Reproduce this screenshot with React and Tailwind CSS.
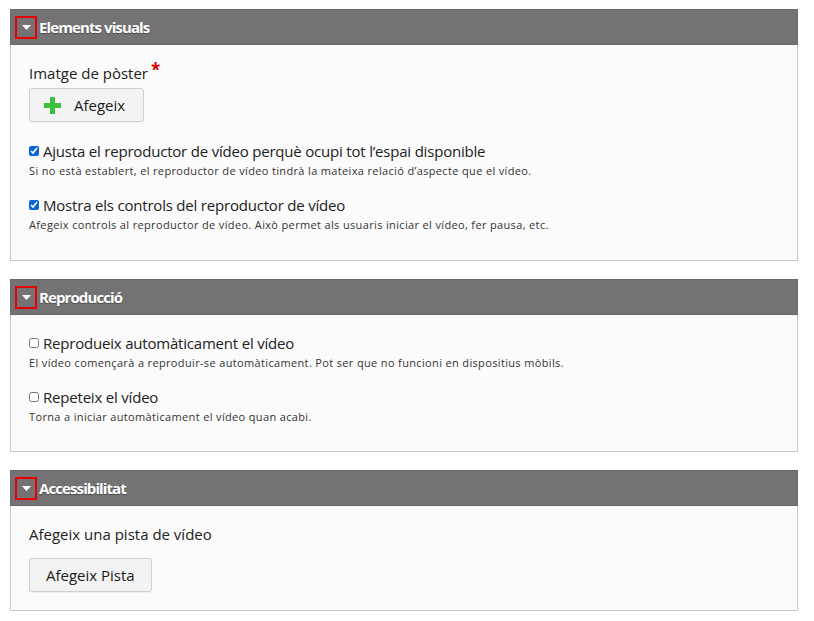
import React from 'react';

const font = { fontFamily: '"Open Sans", "Noto Sans", sans-serif' };

function Section({ title, children, bodyClass = '' }) {
  return (
    <div className="mb-[18px] border border-[#c8c8c8]">
      <div className="flex h-[36px] items-center border border-[#6a686a] bg-[#747274] -m-px mb-0 pl-[4px]">
        <span className="flex h-[23px] w-[22px] items-center justify-center border-2 border-[#e60000]">
          <svg width="9" height="5" viewBox="0 0 9 5">
            <path d="M0 0 L9 0 L4.5 5 Z" fill="#fff" />
          </svg>
        </span>
        <span className="ml-[2px] text-[15px] font-bold tracking-[-0.9px] text-white [text-shadow:0_1px_1px_rgba(0,0,0,0.35)]">
          {title}
        </span>
      </div>
      <div className={`bg-[#fbfbfb] px-[18px] ${bodyClass}`}>{children}</div>
    </div>
  );
}

function Check({ checked, label, desc }) {
  return (
    <div>
      <label className="flex items-center gap-[4px] text-[15px] leading-[20px] text-[#222]">
        <input type="checkbox" defaultChecked={checked} className="m-0 h-[10px] w-[10px] accent-[#0a66d8]" />
        <span className="tracking-[-0.2px]">{label}</span>
      </label>
      <div className="mt-[2px] text-[11px] leading-[16px] tracking-[0.35px] text-[#333]">{desc}</div>
    </div>
  );
}

function Button({ children }) {
  return (
    <button className="flex h-[34px] items-center rounded-[3px] border border-[#cfcfcf] bg-[#f3f3f3] text-[15px] text-[#1a1a1a] shadow-[0_1px_0_rgba(0,0,0,0.04)]">
      {children}
    </button>
  );
}

export default function App() {
  return (
    <div className="min-h-screen bg-white pl-[10px] pr-[16px] pt-[9px]" style={font}>
      <Section title="Elements visuals" bodyClass="pt-[18px] pb-[27px]">
        <div className="flex items-start text-[15px] leading-[20px] text-[#222]">
          Imatge de pòster
          <span className="ml-[3px] -mt-[3px] text-[17px] font-bold text-[#d60000]">*</span>
        </div>
        <div className="mt-[5px]">
          <Button>
            <span className="ml-[14px] mr-[13px] flex">
              <svg width="17" height="17" viewBox="0 0 17 17">
                <path d="M6 0h5v6h6v5h-6v6H6v-6H0V6h6z" fill="#3cbf3c" />
              </svg>
            </span>
            <span className="pr-[18px]">Afegeix</span>
          </Button>
        </div>
        <div className="mt-[19px] flex flex-col gap-[16px]">
          <Check
            checked
            label="Ajusta el reproductor de vídeo perquè ocupi tot l’espai disponible"
            desc="Si no està establert, el reproductor de vídeo tindrà la mateixa relació d’aspecte que el vídeo."
          />
          <Check
            checked
            label="Mostra els controls del reproductor de vídeo"
            desc="Afegeix controls al reproductor de vídeo. Això permet als usuaris iniciar el vídeo, fer pausa, etc."
          />
        </div>
      </Section>

      <Section title="Reproducció" bodyClass="pt-[18px] pb-[26px]">
        <div className="flex flex-col gap-[16px]">
          <Check
            label="Reprodueix automàticament el vídeo"
            desc="El vídeo començarà a reproduir-se automàticament. Pot ser que no funcioni en dispositius mòbils."
          />
          <Check
            label="Repeteix el vídeo"
            desc="Torna a iniciar automàticament el vídeo quan acabi."
          />
        </div>
      </Section>

      <Section title="Accessibilitat" bodyClass="pt-[18px] pb-[18px]">
        <div className="text-[15px] leading-[20px] text-[#222]">Afegeix una pista de vídeo</div>
        <div className="mt-[14px]">
          <Button>
            <span className="px-[16px]">Afegeix Pista</span>
          </Button>
        </div>
      </Section>
    </div>
  );
}
